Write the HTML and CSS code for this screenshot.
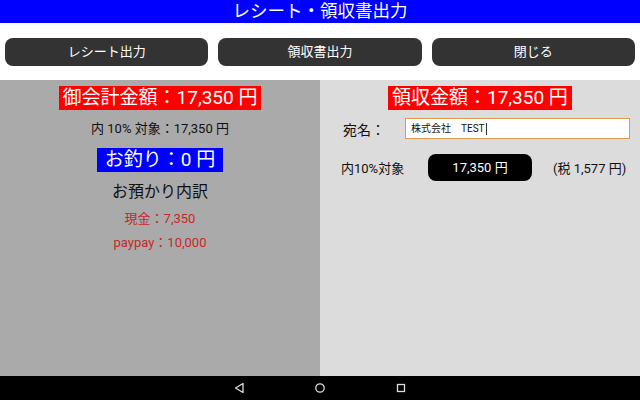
FILE: index.html
```html
<!DOCTYPE html>
<html lang="ja">
<head>
<meta charset="utf-8">
<link rel="stylesheet" href="styles.css">
</head>
<body>
<div class="app">
  <header class="title">レシート・領収書出力</header>
  <div class="toolbar">
    <div class="btn">レシート出力</div>
    <div class="btn">領収書出力</div>
    <div class="btn">閉じる</div>
  </div>
  <main class="main">
    <section class="left">
      <div class="badge red total">御会計金額：17,350 円</div>
      <div class="sub">内 10% 対象：17,350 円</div>
      <div class="badge blue change">お釣り：0 円</div>
      <div class="heading">お預かり内訳</div>
      <div class="pay">現金：7,350</div>
      <div class="pay">paypay：10,000</div>
    </section>
    <section class="right">
      <div class="badge red receipt">領収金額：17,350 円</div>
      <div class="row name-row">
        <span class="label">宛名：</span>
        <div class="input">株式会社　TEST<span class="cursor"></span></div>
      </div>
      <div class="row tax-row">
        <span class="label2">内10%対象</span>
        <div class="pill">17,350 円</div>
        <span class="tax">(税 1,577 円)</span>
      </div>
    </section>
  </main>
  <nav class="navbar">
    <svg class="nav-ico" width="12" height="12" viewBox="0 0 12 12"><path d="M10 1.5 L2.5 6 L10 10.5 Z" fill="none" stroke="#ddd" stroke-width="1.3" stroke-linejoin="round"/></svg>
    <svg class="nav-ico" width="12" height="12" viewBox="0 0 12 12"><circle cx="6" cy="6" r="4.2" fill="none" stroke="#ddd" stroke-width="1.3"/></svg>
    <svg class="nav-ico" width="12" height="12" viewBox="0 0 12 12"><rect x="2.5" y="2.5" width="7" height="7" fill="none" stroke="#ddd" stroke-width="1.3"/></svg>
  </nav>
</div>
</body>
</html>
```
FILE: styles.css
```css
* { box-sizing: border-box; }
html, body { margin: 0; padding: 0; }
body {
  width: 640px;
  height: 400px;
  overflow: hidden;
  font-family: "Roboto", "Noto Sans CJK JP", sans-serif;
}
.app {
  display: flex;
  flex-direction: column;
  width: 640px;
  height: 400px;
}
.title {
  height: 23px;
  background: #0000ff;
  color: #fff;
  font-size: 17.5px;
  line-height: 23px;
  text-align: center;
}
.toolbar {
  height: 57px;
  background: #fff;
  display: flex;
  gap: 10px;
  padding: 15px 5px 0;
}
.btn {
  flex: 1;
  height: 28px;
  background: #333333;
  color: #fff;
  border-radius: 8px;
  font-size: 13px;
  line-height: 28px;
  text-align: center;
}
.main {
  flex: 1;
  display: grid;
  grid-template-columns: 320px 320px;
}
.left {
  background: #aaaaaa;
  display: flex;
  flex-direction: column;
  align-items: center;
  padding-top: 6px;
}
.right {
  background: #dcdcdc;
  display: flex;
  flex-direction: column;
  padding-top: 6px;
}
.badge {
  color: #fff;
  font-size: 19px;
  height: 24px;
  line-height: 24px;
  padding: 0 4px;
  white-space: nowrap;
}
.red { background: #ff0000; }
.blue { background: #0000ff; }
.sub {
  margin-top: 10px;
  font-size: 13px;
  line-height: 18px;
  color: #111;
}
.change {
  margin-top: 10px;
  padding: 0 8px;
}
.heading {
  margin-top: 9px;
  font-size: 16px;
  line-height: 22px;
  color: #111;
}
.pay {
  margin-top: 6px;
  font-size: 13px;
  line-height: 19px;
  color: #c62828;
}
.pay + .pay { margin-top: 5px; }
.receipt {
  align-self: flex-start;
  margin-left: 68px;
}
.row {
  display: flex;
  align-items: center;
}
.name-row {
  margin-top: 8px;
  height: 21px;
}
.label {
  width: 85px;
  padding-left: 23px;
  font-size: 14px;
  color: #111;
}
.input {
  width: 225px;
  height: 21px;
  background: #fff;
  border: 1px solid #e09a50;
  font-size: 10px;
  line-height: 19px;
  padding-left: 5px;
  color: #111;
  display: flex;
  align-items: center;
}
.cursor {
  display: inline-block;
  width: 1px;
  height: 12px;
  background: #333;
  margin-left: 1px;
}
.tax-row {
  margin-top: 15px;
  height: 27px;
}
.label2 {
  width: 108px;
  padding-left: 21px;
  font-size: 13px;
  color: #111;
}
.pill {
  width: 104px;
  height: 27px;
  background: #000;
  color: #fff;
  border-radius: 8px;
  font-size: 13px;
  line-height: 27px;
  text-align: center;
}
.tax {
  margin-left: 21px;
  font-size: 13px;
  color: #111;
}
.navbar {
  height: 24px;
  background: #000;
  display: flex;
  justify-content: center;
  align-items: center;
  gap: 69px;
}
.nav-ico { display: block; }
```
